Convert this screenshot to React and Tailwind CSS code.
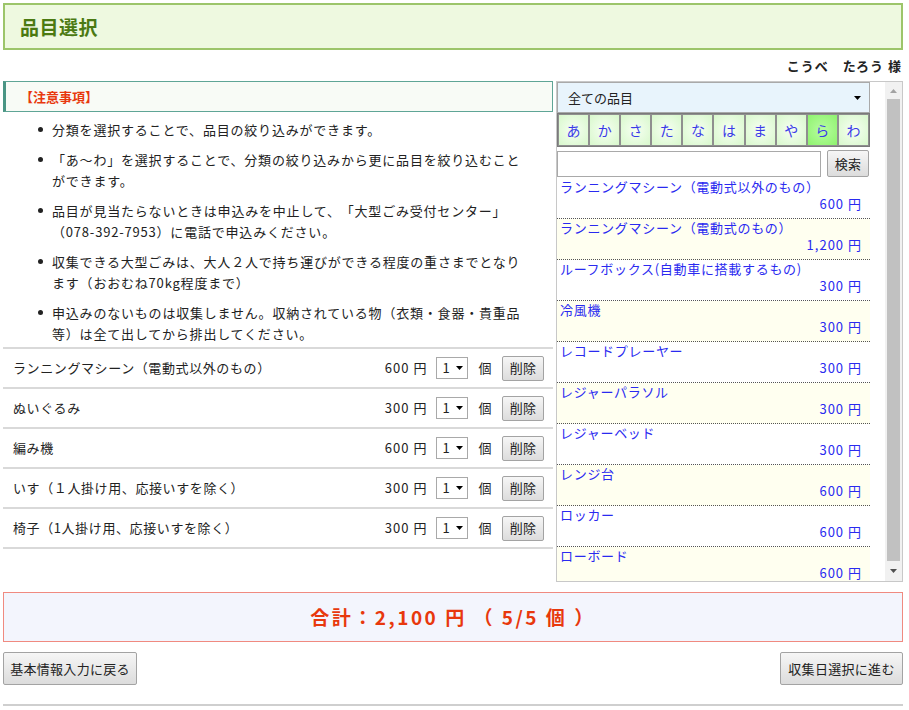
import React from "react";

const F = { fontFamily: '"Noto Sans CJK JP", "Noto Sans", sans-serif' };

const notes = [
  "分類を選択することで、品目の絞り込みができます。",
  "「あ～わ」を選択することで、分類の絞り込みから更に品目を絞り込むことができます。",
  "品目が見当たらないときは申込みを中止して、「大型ごみ受付センター」（078-392-7953）に電話で申込みください。",
  "収集できる大型ごみは、大人２人で持ち運びができる程度の重さまでとなります（おおむね70kg程度まで）",
  "申込みのないものは収集しません。収納されている物（衣類・食器・貴重品等）は全て出してから排出してください。",
];

const selected = [
  ["ランニングマシーン（電動式以外のもの）", "600"],
  ["ぬいぐるみ", "300"],
  ["編み機", "600"],
  ["いす（１人掛け用、応接いすを除く）", "300"],
  ["椅子（1人掛け用、応接いすを除く）", "300"],
];

const kana = ["あ", "か", "さ", "た", "な", "は", "ま", "や", "ら", "わ"];

const items = [
  ["ランニングマシーン（電動式以外のもの）", "600"],
  ["ランニングマシーン（電動式のもの）", "1,200"],
  ["ルーフボックス(自動車に搭載するもの)", "300"],
  ["冷風機", "300"],
  ["レコードプレーヤー", "300"],
  ["レジャーパラソル", "300"],
  ["レジャーベッド", "300"],
  ["レンジ台", "600"],
  ["ロッカー", "600"],
  ["ローボード", "600"],
];

function Tri({ up = false, color = "#000", w = 7, h = 4 }) {
  return (
    <svg width={w} height={h} viewBox="0 0 7 4" className="block">
      <path d={up ? "M0 4 L3.5 0 L7 4 Z" : "M0 0 L7 0 L3.5 4 Z"} fill={color} />
    </svg>
  );
}

function GrayButton({ children, className = "" }) {
  return (
    <button
      className={
        "border border-[#a3a3a3] rounded-[2px] bg-gradient-to-b from-[#f6f6f6] to-[#dcdcdc] text-[13px] text-[#222] flex items-center justify-center tracking-[0.3px] " +
        className
      }
      style={F}
    >
      {children}
    </button>
  );
}

export default function App() {
  return (
    <div
      className="w-[909px] h-[710px] bg-white overflow-hidden text-[#222] [text-spacing-trim:space-all]"
      style={F}
    >
      <div className="ml-[3px] w-[900px]">
        {/* header */}
        <div className="mt-[3px] h-[47px] border-2 border-[#9cc56a] bg-[#eef9e0] flex items-center pl-[15px]">
          <h1 className="text-[19px] font-bold text-[#4b7a12] leading-none tracking-[0.5px]">品目選択</h1>
        </div>
        <div className="h-[31px] flex items-center justify-end pr-[1px] text-[13px] font-bold tracking-[1px]">
          こうべ　たろう 様
        </div>

        <div className="flex">
          {/* left */}
          <div className="w-[550px]">
            <div className="h-[31px] border border-[#5fa596] border-l-[3px] border-l-[#4a9584] bg-[#f8fbf6] flex items-center pl-[14px]">
              <span className="text-[13px] font-bold text-[#e8380d]">【注意事項】</span>
            </div>
            <ul className="mt-[7px] pl-[49px] pr-[23px] text-[13px] leading-[21px] tracking-[0.8px]">
              {notes.map((n, i) => (
                <li key={i} className="relative mb-[9px]">
                  <span className="absolute left-[-14px] top-[8px] w-[5px] h-[5px] rounded-full bg-[#222]" />
                  {n}
                </li>
              ))}
            </ul>
            <div className="mt-[-6px] border-b-2 border-[#d9d9d9]">
              {selected.map(([name, price], i) => (
                <div
                  key={i}
                  className="h-[40px] border-t-2 border-[#d9d9d9] flex items-center pl-[10px] pr-[9px] text-[13px] tracking-[0.6px]"
                >
                  <span className="flex-1">{name}</span>
                  <span className="mr-[9px] tracking-[1px]">{price} 円</span>
                  <div className="w-[32px] h-[22px] border border-[#a9a9a9] bg-white flex items-center pl-[5px] text-[13px]">
                    <span>1</span>
                    <span className="ml-[6px]">
                      <Tri />
                    </span>
                  </div>
                  <span className="ml-[10px] mr-[10px]">個</span>
                  <GrayButton className="w-[42px] h-[25px]">削除</GrayButton>
                </div>
              ))}
            </div>
          </div>

          {/* right */}
          <div className="ml-[3px] w-[347px] h-[501px] border border-[#c8c8c8] flex">
            <div className="w-[313px] overflow-hidden">
              <div className="h-[31px] bg-[#e8f4fc] border border-[#a9a9a9] flex items-center pl-[10px] pr-[8px] text-[13px]">
                <span className="flex-1">全ての品目</span>
                <Tri />
              </div>
              <div className="h-[34px] border border-[#7a7a7a] flex">
                {kana.map((k) => (
                  <div
                    key={k}
                    className={
                      "flex-1 border border-[#8f8f8f] flex items-center justify-center text-[14px] text-[#3a3ae8] " +
                      (k === "ら"
                        ? "bg-[radial-gradient(circle,#b8fca0_0%,#8ef36e_100%)]"
                        : "bg-[radial-gradient(circle,#f6fff2_0%,#d8f8cc_100%)]")
                    }
                  >
                    {k}
                  </div>
                ))}
              </div>
              <div className="h-[31px] flex items-center pt-[2px]">
                <div className="w-[264px] h-[26px] border border-[#a9a9a9] bg-white" />
                <GrayButton className="ml-[6px] w-[42px] h-[27px]">検索</GrayButton>
              </div>
              {items.map(([name, price], i) => (
                <div
                  key={i}
                  className={
                    "h-[41px] border-b border-dotted border-[#555] text-[13px] text-[#2a2af0] flex flex-col tracking-[0.7px] " +
                    (i % 2 === 1 ? "bg-[#fffff0]" : "bg-white")
                  }
                >
                  <div className="pl-[3px] leading-[17px]">{name}</div>
                  <div className="text-right pr-[8px] leading-[17px] tracking-[1px]">{price} 円</div>
                </div>
              ))}
            </div>
            <div className="w-[15px]" />
            {/* scrollbar */}
            <div className="w-[17px] bg-[#f1f1f1] flex flex-col items-center">
              <div className="h-[17px] flex items-center justify-center">
                <Tri up color="#a3a3a3" />
              </div>
              <div className="w-[13px] h-[462px] bg-[#c1c1c1]" />
              <div className="flex-1 flex items-center justify-center">
                <Tri color="#505050" />
              </div>
            </div>
          </div>
        </div>

        {/* total */}
        <div className="mt-[10px] h-[50px] border border-[#f08a80] bg-[#f3f5fd] flex items-center justify-center">
          <span className="text-[19px] font-bold text-[#e8380d] tracking-[2.5px]">合計：2,100 円 （ 5/5 個 ）</span>
        </div>

        <div className="mt-[10px] flex justify-between">
          <GrayButton className="w-[134px] h-[33px]">基本情報入力に戻る</GrayButton>
          <GrayButton className="w-[123px] h-[33px]">収集日選択に進む</GrayButton>
        </div>

        <div className="mt-[19px] border-t-2 border-[#cfcfcf]" />
      </div>
    </div>
  );
}
